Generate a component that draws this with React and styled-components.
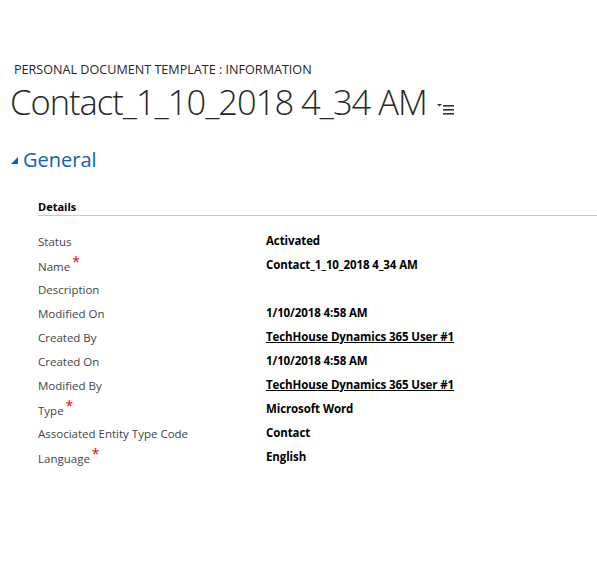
import React from "react";
import styled, { createGlobalStyle } from "styled-components";

const Global = createGlobalStyle`
  html, body { margin: 0; padding: 0; background: #fff; }
  body { font-family: "Open Sans", "Noto Sans", sans-serif; color: #000; }
`;

const Page = styled.div`
  width: 597px;
  height: 579px;
  overflow: hidden;
  padding-top: 62px;
  box-sizing: border-box;
`;

const Header = styled.header`
  padding-left: 10px;
`;

const EntityType = styled.div`
  font-size: 12.6px;
  line-height: 16px;
  color: #262626;
  padding-left: 4px;
`;

const TitleRow = styled.div`
  display: flex;
  align-items: flex-end;
  gap: 10px;
  margin-top: 4px;
`;

const Title = styled.h1`
  margin: 0;
  font-weight: 300;
  font-size: 34.5px;
  line-height: 40px;
  color: #262626;
  letter-spacing: -1px;
`;

const MenuIcon = styled.svg`
  width: 18px;
  height: 12px;
  margin-bottom: 6px;
`;

const Section = styled.section`
  margin-top: 24px;
`;

const SectionHead = styled.div`
  display: flex;
  align-items: center;
  gap: 5px;
  padding-left: 11px;
`;

const SectionTitle = styled.h2`
  margin: 0;
  font-weight: 400;
  font-size: 20px;
  line-height: 28px;
  color: #1160b7;
`;

const Group = styled.div`
  margin-top: 26px;
  padding-left: 38px;
`;

const GroupTitle = styled.div`
  font-size: 11px;
  font-weight: 700;
  line-height: 14px;
  padding-bottom: 1px;
  border-bottom: 1px solid #c8c8c8;
`;

const Rows = styled.div`
  display: grid;
  grid-template-columns: 228px 1fr;
  grid-auto-rows: 24px;
  margin-top: 14px;
`;

const Label = styled.div`
  font-size: 11.5px;
  color: #444;
  line-height: 24px;
`;

const Req = styled.span`
  color: #e00;
  font-size: 14px;
  position: relative;
  top: -4px;
  margin-left: 2px;
`;

const Value = styled.div`
  font-size: 11.5px;
  font-weight: 700;
  line-height: 22px;
  color: #000;
  text-decoration: ${(p) => (p.$link ? "underline" : "none")};
  letter-spacing: -0.1px;
`;

const rows = [
  ["Status", "Activated"],
  ["Name", "Contact_1_10_2018 4_34 AM", true],
  ["Description", ""],
  ["Modified On", "1/10/2018 4:58 AM"],
  ["Created By", "TechHouse Dynamics 365 User #1", false, true],
  ["Created On", "1/10/2018 4:58 AM"],
  ["Modified By", "TechHouse Dynamics 365 User #1", false, true],
  ["Type", "Microsoft Word", true],
  ["Associated Entity Type Code", "Contact"],
  ["Language", "English", true],
];

export default function App() {
  return (
    <Page>
      <Global />
      <Header>
        <EntityType>PERSONAL DOCUMENT TEMPLATE : INFORMATION</EntityType>
        <TitleRow>
          <Title>Contact_1_10_2018 4_34 AM</Title>
          <MenuIcon viewBox="0 0 18 12">
            <polygon points="0,0 5,0 2.5,2.5" fill="#333" />
            <rect x="6" y="1" width="11" height="1.6" fill="#333" />
            <rect x="6" y="5" width="11" height="1.6" fill="#333" />
            <rect x="6" y="9" width="11" height="1.6" fill="#333" />
          </MenuIcon>
        </TitleRow>
      </Header>
      <Section>
        <SectionHead>
          <svg width="7" height="7" viewBox="0 0 7 7">
            <polygon points="7,0 7,7 0,7" fill="#1160b7" />
          </svg>
          <SectionTitle>General</SectionTitle>
        </SectionHead>
        <Group>
          <GroupTitle>Details</GroupTitle>
          <Rows>
            {rows.map(([l, v, req, link]) => (
              <React.Fragment key={l}>
                <Label>
                  {l}
                  {req && <Req>*</Req>}
                </Label>
                <Value $link={link}>{v}</Value>
              </React.Fragment>
            ))}
          </Rows>
        </Group>
      </Section>
    </Page>
  );
}
